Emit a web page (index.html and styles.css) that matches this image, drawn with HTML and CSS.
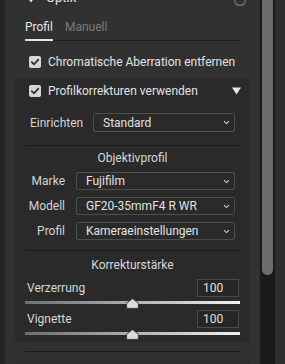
FILE: index.html
```html
<!DOCTYPE html>
<html lang="de">
<head>
    <meta charset="UTF-8">
    <meta name="viewport" content="width=device-width, initial-scale=1.0">
    <title>Optik</title>
    <link rel="stylesheet" href="styles.css">
</head>
<body>

    <div class="app">
        <div class="edge"></div>

        <div class="panel">
            <div class="section-head">
                <svg class="disclosure" width="8" height="6" viewBox="0 0 8 6"><path d="M0.5 0.5 H7.5 L4 5.5 Z" fill="#e6e6e6"/></svg>
                <span class="section-title">Optik</span>
                <svg class="power" width="14" height="14" viewBox="0 0 14 14"><circle cx="7" cy="7" r="5.5" fill="none" stroke="#6a6a6a" stroke-width="1.6"/></svg>
            </div>

            <div class="tabs">
                <span class="tab active">Profil</span>
                <span class="tab">Manuell</span>
            </div>

            <div class="check-row">
                <span class="checkbox"><svg width="12" height="12" viewBox="0 0 12 12"><path d="M2.8 6.2 L5 8.4 L9.3 3.6" fill="none" stroke="#2e2e2e" stroke-width="1.7" stroke-linecap="round" stroke-linejoin="round"/></svg></span>
                <span>Chromatische Aberration entfernen</span>
            </div>

            <div class="group">
                <div class="check-row group-head">
                    <span class="checkbox"><svg width="12" height="12" viewBox="0 0 12 12"><path d="M2.8 6.2 L5 8.4 L9.3 3.6" fill="none" stroke="#2e2e2e" stroke-width="1.7" stroke-linecap="round" stroke-linejoin="round"/></svg></span>
                    <span>Profilkorrekturen verwenden</span>
                    <svg class="caret" width="9" height="8" viewBox="0 0 9 8"><path d="M0 0.5 H9 L4.5 7.5 Z" fill="#e8e8e8"/></svg>
                </div>

                <div class="setup-row">
                    <span class="setup-label">Einrichten</span>
                    <div class="select">
                        <span>Standard</span>
                        <svg class="chevron" width="7" height="5" viewBox="0 0 7 5"><path d="M1 1.2 L3.5 3.6 L6 1.2" fill="none" stroke="#cfcfcf" stroke-width="1.1"/></svg>
                    </div>
                </div>

                <div class="divider"></div>

                <div class="group-title">Objektivprofil</div>

                <div class="lens-rows">
                    <div class="lens-row">
                        <span class="lens-label">Marke</span>
                        <div class="select">
                            <span>Fujifilm</span>
                            <svg class="chevron" width="7" height="5" viewBox="0 0 7 5"><path d="M1 1.2 L3.5 3.6 L6 1.2" fill="none" stroke="#cfcfcf" stroke-width="1.1"/></svg>
                        </div>
                    </div>
                    <div class="lens-row">
                        <span class="lens-label">Modell</span>
                        <div class="select">
                            <span>GF20-35mmF4 R WR</span>
                            <svg class="chevron" width="7" height="5" viewBox="0 0 7 5"><path d="M1 1.2 L3.5 3.6 L6 1.2" fill="none" stroke="#cfcfcf" stroke-width="1.1"/></svg>
                        </div>
                    </div>
                    <div class="lens-row">
                        <span class="lens-label">Profil</span>
                        <div class="select">
                            <span>Kameraeinstellungen</span>
                            <svg class="chevron" width="7" height="5" viewBox="0 0 7 5"><path d="M1 1.2 L3.5 3.6 L6 1.2" fill="none" stroke="#cfcfcf" stroke-width="1.1"/></svg>
                        </div>
                    </div>
                </div>

                <div class="divider lower"></div>

                <div class="group-title strength">Korrekturstärke</div>

                <div class="value-row">
                    <span class="value-label">Verzerrung</span>
                    <span class="value-box">100</span>
                </div>
                <div class="slider">
                    <div class="track"></div>
                    <svg class="knob" style="left: 50%" width="13" height="11" viewBox="0 0 13 11"><path d="M6.5 0.6 L12.4 5.2 V9.2 Q12.4 10.4 11.2 10.4 H1.8 Q0.6 10.4 0.6 9.2 V5.2 Z" fill="#dcdcdc" stroke="#3a3a3a" stroke-width="1"/></svg>
                </div>

                <div class="value-row second">
                    <span class="value-label">Vignette</span>
                    <span class="value-box">100</span>
                </div>
                <div class="slider">
                    <div class="track"></div>
                    <svg class="knob" style="left: 50%" width="13" height="11" viewBox="0 0 13 11"><path d="M6.5 0.6 L12.4 5.2 V9.2 Q12.4 10.4 11.2 10.4 H1.8 Q0.6 10.4 0.6 9.2 V5.2 Z" fill="#dcdcdc" stroke="#3a3a3a" stroke-width="1"/></svg>
                </div>
            </div>

            <div class="divider outer"></div>

            <div class="group next"></div>
        </div>

        <div class="scrollbar">
            <div class="thumb"></div>
        </div>

        <div class="gutter"></div>
    </div>

</body>
</html>
```

FILE: styles.css
```css
* { margin: 0; padding: 0; box-sizing: border-box; }

body {
    font-family: Roboto, "Liberation Sans", sans-serif;
    font-size: 12px;
    color: #e2e2e2;
    background: #2e2e2e;
    overflow: hidden;
}

.app {
    display: flex;
    height: 364px;
    overflow: hidden;
}

.edge {
    width: 5px;
    flex: none;
    background: #262626;
}

.panel {
    width: 255px;
    flex: none;
    background: #313131;
    padding: 0 20px;
}

/* header, mostly scrolled away */
.section-head {
    display: flex;
    align-items: flex-start;
    height: 16px;
    margin-top: -10px;
}

.disclosure {
    margin: 7px 0 0 2px;
}

.section-title {
    margin-left: 11px;
    font-size: 13px;
    line-height: 16px;
}

.power {
    margin: 3px 0 0 auto;
    margin-right: -7px;
}

/* tabs */
.tabs {
    display: flex;
    margin-top: 13px;
    border-bottom: 1px solid #1c1c1c;
}

.tab {
    height: 22px;
    line-height: 16px;
    padding-bottom: 4px;
    margin-right: 12px;
    margin-bottom: -1px;
    font-size: 12px;
    color: #7a7a7a;
    border-bottom: 2px solid transparent;
}

.tab.active {
    color: #e4e4e4;
    border-bottom-color: #e4e4e4;
}

/* checkbox rows */
.check-row {
    display: flex;
    align-items: center;
    height: 22px;
    margin-top: 10px;
    padding-left: 4px;
}

.checkbox {
    width: 12px;
    height: 12px;
    flex: none;
    margin-right: 7px;
    border-radius: 2px;
    background: #d6d6d6;
    display: flex;
}

.group {
    margin: 5px -10px 0;
    padding: 0 10px 2px;
    background: #2a2a2a;
    border-radius: 3px;
}

.group-head {
    height: 25px;
    margin-top: 0;
    padding-top: 1px;
}

.caret {
    margin-left: auto;
    margin-right: -1px;
}

/* selects */
.select {
    flex: 1;
    display: flex;
    align-items: center;
    height: 18px;
    padding: 0 4px 0 9px;
    border: 1px solid #4e4e4e;
    border-radius: 2px;
    background: #2a2a2a;
    color: #e2e2e2;
}

.chevron {
    margin-left: auto;
}

.setup-row {
    display: flex;
    align-items: center;
    margin-top: 10px;
    padding: 0 5px;
}

.setup-row .select {
    height: 19px;
    flex: none;
    width: 142px;
    margin-left: auto;
}

.setup-label {
    color: #d2d2d2;
}

.divider {
    height: 1px;
    margin-top: 13px;
    background: #1b1b1b;
}

.divider.lower {
    margin-top: 10px;
}

.divider.outer {
    margin-top: 9px;
}

.group-title {
    height: 24px;
    line-height: 24px;
    text-align: center;
    color: #d8d8d8;
}

.group-title.strength {
    height: 28px;
    line-height: 28px;
}

.lens-rows {
    display: flex;
    flex-direction: column;
    gap: 7px;
    margin-top: 2px;
    padding-right: 5px;
}

.lens-row {
    display: flex;
    align-items: center;
}

.lens-label {
    width: 40px;
    margin-right: 11px;
    text-align: right;
    color: #d2d2d2;
}

/* sliders */
.value-row {
    display: flex;
    align-items: center;
    justify-content: space-between;
    height: 18px;
    padding-left: 2px;
}

.value-row.second {
    margin-top: 1px;
}

.value-label {
    color: #d8d8d8;
}

.value-box {
    width: 42px;
    height: 18px;
    margin-right: 1px;
    padding-left: 5px;
    line-height: 16px;
    border: 1px solid #4a4a4a;
    background: #262626;
}

.slider {
    position: relative;
    height: 12px;
}

.track {
    position: relative;
    top: 4px;
    height: 3px;
    background: linear-gradient(to right, #6e6e6e, #f2f2f2);
}

.knob {
    position: absolute;
    top: 1px;
    margin-left: -6.5px;
}

.group.next {
    height: 20px;
    margin-top: 9px;
    background: #2c2c2c;
}

/* scroll bar and right gutter */
.scrollbar {
    width: 15px;
    flex: none;
    background: #1a1a1a;
    padding: 0 2px;
}

.thumb {
    height: 275px;
    margin-top: 0;
    border-radius: 0 0 6px 6px;
    background: #6d6d6d;
}

.gutter {
    flex: 1;
    background: #2e2e2e;
}
```
